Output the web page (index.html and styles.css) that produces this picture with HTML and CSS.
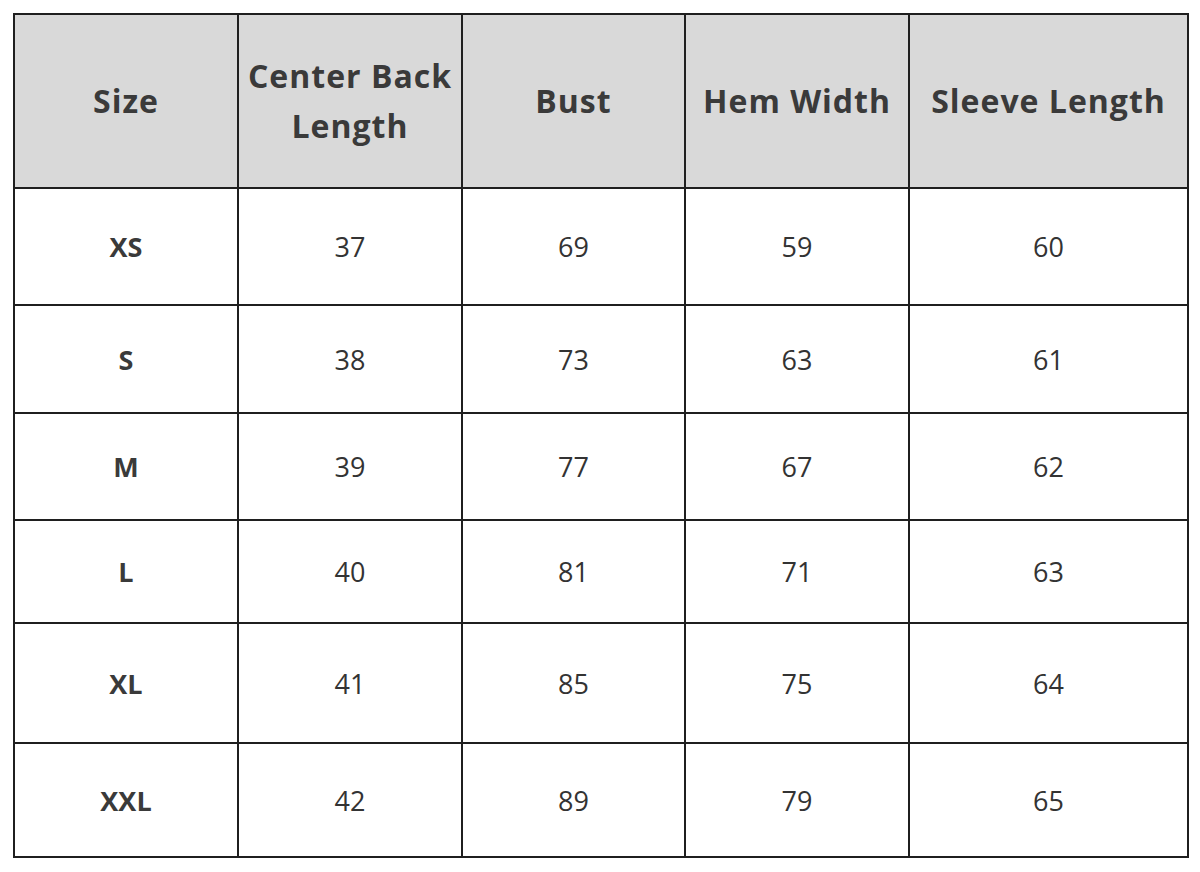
FILE: index.html
```html
<!DOCTYPE html>
<html>
<head>
<meta charset="utf-8">
<link rel="stylesheet" href="styles.css">
</head>
<body>
<table class="size-table">
  <colgroup>
    <col class="c1"><col class="c2"><col class="c3"><col class="c4"><col class="c5">
  </colgroup>
  <thead>
    <tr class="r-head">
      <th>Size</th>
      <th>Center Back<br>Length</th>
      <th>Bust</th>
      <th>Hem Width</th>
      <th>Sleeve Length</th>
    </tr>
  </thead>
  <tbody>
    <tr class="r1"><td class="sz">XS</td><td>37</td><td>69</td><td>59</td><td>60</td></tr>
    <tr class="r2"><td class="sz">S</td><td>38</td><td>73</td><td>63</td><td>61</td></tr>
    <tr class="r3"><td class="sz">M</td><td>39</td><td>77</td><td>67</td><td>62</td></tr>
    <tr class="r4"><td class="sz">L</td><td>40</td><td>81</td><td>71</td><td>63</td></tr>
    <tr class="r5"><td class="sz">XL</td><td>41</td><td>85</td><td>75</td><td>64</td></tr>
    <tr class="r6"><td class="sz">XXL</td><td>42</td><td>89</td><td>79</td><td>65</td></tr>
  </tbody>
</table>
</body>
</html>
```
FILE: styles.css
```css
html, body {
  margin: 0;
  background: #ffffff;
}
body {
  padding: 13px;
  font-family: "Open Sans", "Noto Sans", sans-serif;
  color: #333333;
}
.size-table {
  border-collapse: collapse;
  table-layout: fixed;
  width: 1174px;
  border: 2px solid #1f1f1f;
}
.c1 { width: 224px; }
.c2 { width: 224px; }
.c3 { width: 223px; }
.c4 { width: 224px; }
.c5 { width: 279px; }
th, td {
  border: 2px solid #1f1f1f;
  text-align: center;
  vertical-align: middle;
  padding: 0;
}
th {
  background: #d9d9d9;
  font-weight: 700;
  font-size: 32px;
  letter-spacing: 1px;
  line-height: 50px;
  color: #3a3a3a;
}
td {
  font-size: 27px;
  font-weight: 400;
  color: #333333;
}
td.sz {
  font-weight: 700;
  color: #3a3a3a;
}
.r-head { height: 174px; }
.r1 { height: 117px; }
.r2 { height: 108px; }
.r3 { height: 107px; }
.r4 { height: 103px; }
.r5 { height: 120px; }
.r6 { height: 114px; }
```
